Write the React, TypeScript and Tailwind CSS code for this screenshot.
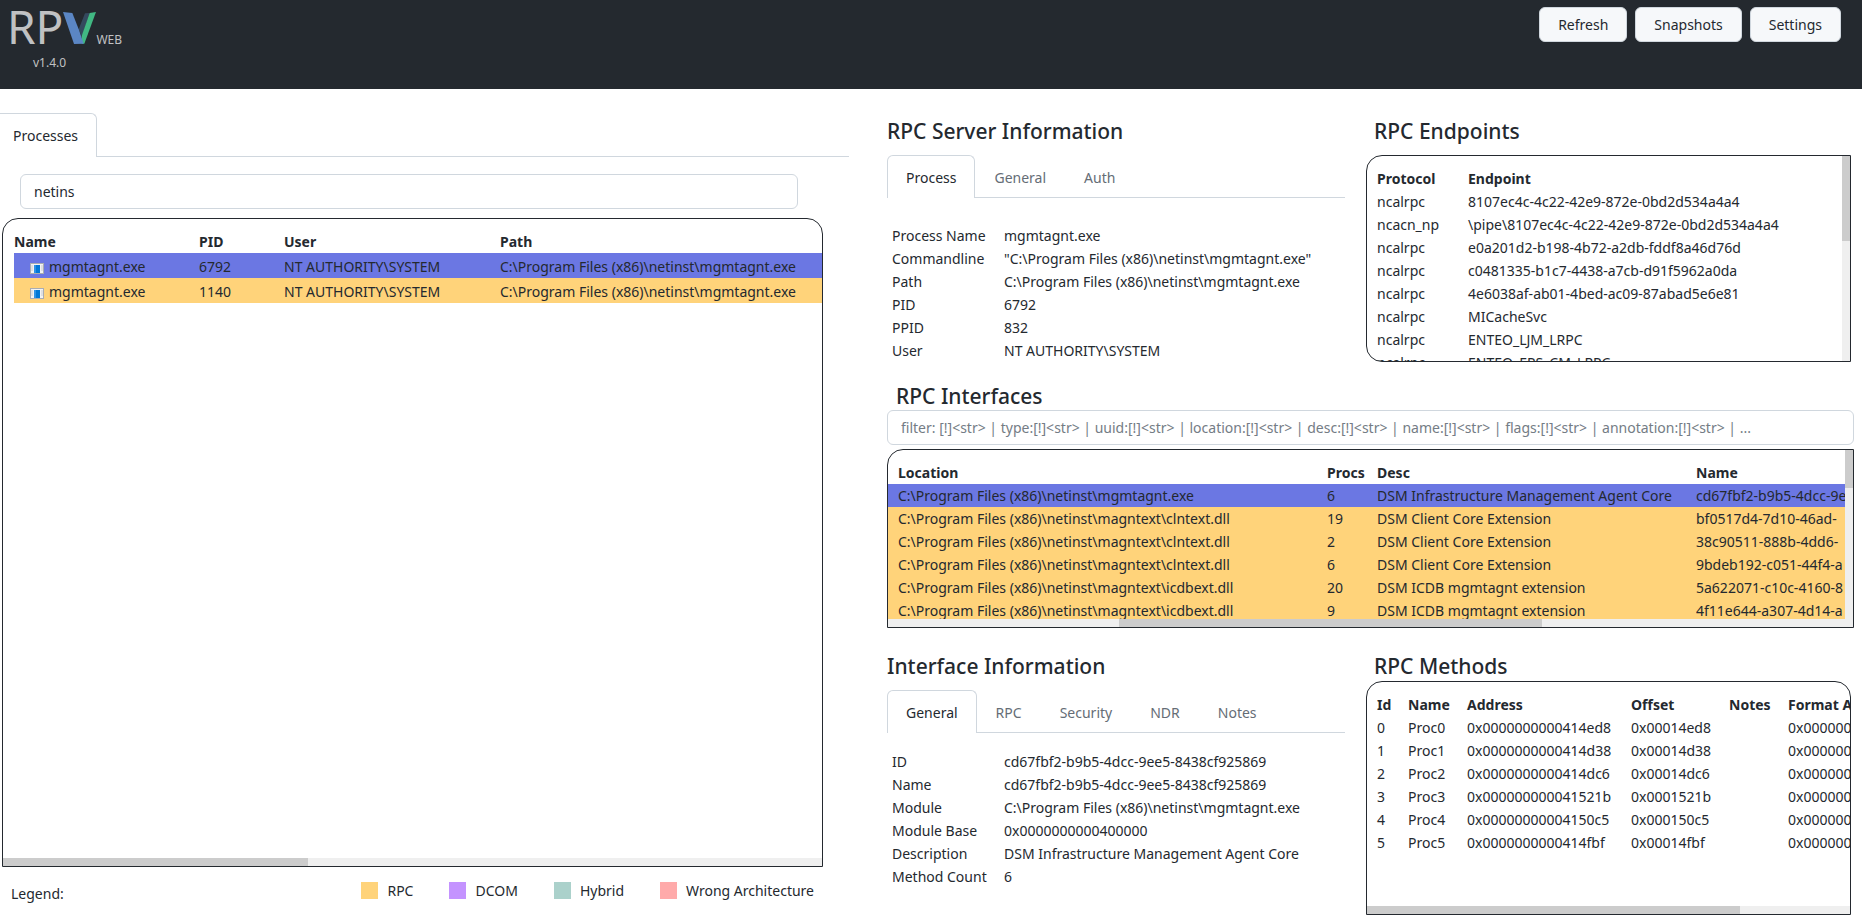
import React, { useState } from 'react';

const processes = [
  { name: 'mgmtagnt.exe', pid: 6792, user: 'NT AUTHORITY\\SYSTEM', path: 'C:\\Program Files (x86)\\netinst\\mgmtagnt.exe' },
  { name: 'mgmtagnt.exe', pid: 1140, user: 'NT AUTHORITY\\SYSTEM', path: 'C:\\Program Files (x86)\\netinst\\mgmtagnt.exe' },
];

const serverInfo = [
  ['Process Name', 'mgmtagnt.exe'],
  ['Commandline', '"C:\\Program Files (x86)\\netinst\\mgmtagnt.exe"'],
  ['Path', 'C:\\Program Files (x86)\\netinst\\mgmtagnt.exe'],
  ['PID', '6792'],
  ['PPID', '832'],
  ['User', 'NT AUTHORITY\\SYSTEM'],
];

const endpoints = [
  ['ncalrpc', '8107ec4c-4c22-42e9-872e-0bd2d534a4a4'],
  ['ncacn_np', '\\pipe\\8107ec4c-4c22-42e9-872e-0bd2d534a4a4'],
  ['ncalrpc', 'e0a201d2-b198-4b72-a2db-fddf8a46d76d'],
  ['ncalrpc', 'c0481335-b1c7-4438-a7cb-d91f5962a0da'],
  ['ncalrpc', '4e6038af-ab01-4bed-ac09-87abad5e6e81'],
  ['ncalrpc', 'MICacheSvc'],
  ['ncalrpc', 'ENTEO_LJM_LRPC'],
  ['ncalrpc', 'ENTEO_EPS_CM_LRPC'],
];

const interfaces = [
  ['C:\\Program Files (x86)\\netinst\\mgmtagnt.exe', '6', 'DSM Infrastructure Management Agent Core', 'cd67fbf2-b9b5-4dcc-9ee5-8438cf925869'],
  ['C:\\Program Files (x86)\\netinst\\magntext\\clntext.dll', '19', 'DSM Client Core Extension', 'bf0517d4-7d10-46ad-'],
  ['C:\\Program Files (x86)\\netinst\\magntext\\clntext.dll', '2', 'DSM Client Core Extension', '38c90511-888b-4dd6-'],
  ['C:\\Program Files (x86)\\netinst\\magntext\\clntext.dll', '6', 'DSM Client Core Extension', '9bdeb192-c051-44f4-a'],
  ['C:\\Program Files (x86)\\netinst\\magntext\\icdbext.dll', '20', 'DSM ICDB mgmtagnt extension', '5a622071-c10c-4160-8'],
  ['C:\\Program Files (x86)\\netinst\\magntext\\icdbext.dll', '9', 'DSM ICDB mgmtagnt extension', '4f11e644-a307-4d14-a'],
];

const interfaceInfo = [
  ['ID', 'cd67fbf2-b9b5-4dcc-9ee5-8438cf925869'],
  ['Name', 'cd67fbf2-b9b5-4dcc-9ee5-8438cf925869'],
  ['Module', 'C:\\Program Files (x86)\\netinst\\mgmtagnt.exe'],
  ['Module Base', '0x0000000000400000'],
  ['Description', 'DSM Infrastructure Management Agent Core'],
  ['Method Count', '6'],
];

const methods = [
  ['0', 'Proc0', '0x0000000000414ed8', '0x00014ed8'],
  ['1', 'Proc1', '0x0000000000414d38', '0x00014d38'],
  ['2', 'Proc2', '0x0000000000414dc6', '0x00014dc6'],
  ['3', 'Proc3', '0x000000000041521b', '0x0001521b'],
  ['4', 'Proc4', '0x00000000004150c5', '0x000150c5'],
  ['5', 'Proc5', '0x0000000000414fbf', '0x00014fbf'],
];

const legend = [
  { label: 'RPC', color: 'bg-[#ffd37a]' },
  { label: 'DCOM', color: 'bg-[#c493ff]' },
  { label: 'Hybrid', color: 'bg-[#abd1cb]' },
  { label: 'Wrong Architecture', color: 'bg-[#ffaaaa]' },
];

const inputClass =
  'h-[35px] px-[13px] border border-[#d0d7de] rounded-md bg-white placeholder:text-[#747c85] focus:outline-none';

const VueLogo = () => (
  <svg viewBox="0 0 99 96" className="w-[33px] h-8" aria-hidden="true">
    <polygon points="66,4 80,3 57,74 47,52" fill="#34495e" />
    <polygon points="80,3 99,0 64,95 56,95 56,72" fill="#41b883" />
    <polygon points="0,0 28,3 48,54 62,95 33,96" fill="#5b86c4" />
  </svg>
);

const ExeIcon = () => (
  <svg viewBox="0 0 14 11" className="w-3.5 h-[11px] mt-1" aria-hidden="true">
    <rect width="14" height="11" fill="#a9adb3" />
    <rect x="1" y="1" width="12" height="9" fill="#f3f3f3" />
    <rect x="4" y="2" width="6" height="8" fill="#0078d7" />
    <path d="M4 2h2v8h-2z" fill="#2f93e6" />
    <path d="M1 3h2M1 5h2M1 7h2M11 3h2M11 5h2M11 7h2" stroke="#c9ccd0" />
  </svg>
);

const Tabs = ({ items, flush }: { items: string[]; flush?: boolean }) => {
  const [active, setActive] = useState(items[0]);

  return (
    <div role="tablist" className="flex border-b border-[#d0d7de]">
      {items.map((item) => (
        <button
          key={item}
          role="tab"
          aria-selected={item === active}
          onClick={() => setActive(item)}
          className={`-mb-px pr-[18px] border border-b-0 rounded-t-md ${
            flush ? 'h-11 pl-[13px] border-l-0 rounded-tl-none' : 'h-[43px] pl-[18px]'
          } ${item === active ? 'bg-white border-[#d0d7de]' : 'border-transparent text-[#656d76]'}`}
        >
          {item}
        </button>
      ))}
    </div>
  );
};

const InfoTable = ({ rows }: { rows: string[][] }) => (
  <table className="w-full text-left table-fixed">
    <colgroup>
      <col className="w-[117px]" />
      <col />
    </colgroup>
    <tbody>
      {rows.map(([label, value]) => (
        <tr key={label} className="h-[23px]">
          <th scope="row" className="pl-[5px] font-normal">{label}</th>
          <td>{value}</td>
        </tr>
      ))}
    </tbody>
  </table>
);

// start and size are percentages of the track
const ScrollBar = ({ vertical, start = 0, size }: { vertical?: boolean; start?: number; size: number }) => (
  <div className={`flex shrink-0 bg-[#efefef] ${vertical ? 'flex-col w-2' : 'h-2'}`}>
    <div style={vertical ? { height: `${start}%` } : { width: `${start}%` }} />
    <div className="bg-[#cccccc]" style={vertical ? { height: `${size}%` } : { width: `${size}%` }} />
  </div>
);

const App = () => {
  const [processFilter, setProcessFilter] = useState('netins');
  const [interfaceFilter, setInterfaceFilter] = useState('');
  const [selectedPid, setSelectedPid] = useState(6792);
  const [selectedInterface, setSelectedInterface] = useState(0);

  return (
    <div className="flex flex-col min-h-screen bg-white text-[#24292f] text-sm leading-[23px] whitespace-nowrap font-['Noto_Sans',sans-serif]">
      <header className="flex items-start justify-between h-[89px] bg-[#24292f] pl-[7px] pr-[21px]">
        <div className="pt-[3px] text-[#c0c1c3]">
          <div className="flex items-baseline">
            <span className="text-[46px] leading-none">RP</span>
            <VueLogo />
            <span className="text-xs leading-none">WEB</span>
          </div>
          <div className="pl-[26px] pt-[5px] text-xs leading-[18px]">v1.4.0</div>
        </div>
        <div className="flex gap-2 pt-[7px]">
          {['Refresh', 'Snapshots', 'Settings'].map((label) => (
            <button key={label} className="h-[35px] px-[18px] rounded-md border border-[#d0d7de] bg-[#f6f8fa]">
              {label}
            </button>
          ))}
        </div>
      </header>

      <main className="grid flex-1 grid-cols-[849fr_1013fr] pt-6">
        {/* Process list */}
        <section className="flex flex-col min-w-0">
          <Tabs items={['Processes']} flush />
          <input
            type="text"
            aria-label="Filter processes"
            value={processFilter}
            onChange={(e) => setProcessFilter(e.target.value)}
            className={`${inputClass} mt-[17px] ml-5 mr-[51px]`}
          />
          <div className="flex flex-col flex-1 mt-[9px] ml-0.5 mr-[26px] border border-[#24292f] rounded-t-2xl overflow-hidden">
            <div className="flex-1 pt-[11px] pl-[11px] overflow-hidden">
              <table className="w-full text-left table-fixed">
                <colgroup>
                  <col className="w-[185px]" />
                  <col className="w-[85px]" />
                  <col className="w-[216px]" />
                  <col />
                </colgroup>
                <thead>
                  <tr className="h-[23px]">
                    <th>Name</th>
                    <th>PID</th>
                    <th>User</th>
                    <th>Path</th>
                  </tr>
                </thead>
                <tbody>
                  {processes.map((p) => (
                    <tr
                      key={p.pid}
                      onClick={() => setSelectedPid(p.pid)}
                      className={`h-[25px] ${p.pid === selectedPid ? 'bg-[#6b77e3]' : 'bg-[#ffd37a]'}`}
                    >
                      <td className="pt-0.5 pl-4">
                        <span className="flex items-center gap-[5px]">
                          <ExeIcon />
                          {p.name}
                        </span>
                      </td>
                      <td className="pt-0.5">{p.pid}</td>
                      <td className="pt-0.5">{p.user}</td>
                      <td className="pt-0.5">{p.path}</td>
                    </tr>
                  ))}
                </tbody>
              </table>
            </div>
            <ScrollBar size={37.3} />
          </div>
          <div className="flex items-center justify-between h-[52px] pl-[11px] pr-[35px]">
            <span>Legend:</span>
            <ul className="flex pb-1.5 gap-9">
              {legend.map((item) => (
                <li key={item.label} className="flex items-center gap-[9px]">
                  <span className={`w-[17px] h-[17px] ${item.color}`} />
                  {item.label}
                </li>
              ))}
            </ul>
          </div>
        </section>

        <section className="flex flex-col min-w-0 pl-[38px] pr-2 pb-1">
          <div className="grid grid-cols-[17fr_18fr] gap-[21px] pr-[3px]">
            {/* Server */}
            <div className="min-w-0">
              <h2 className="mt-1 mb-[10px] text-[21px] leading-7 font-medium">RPC Server Information</h2>
              <Tabs items={['Process', 'General', 'Auth']} />
              <div className="mt-[26px]">
                <InfoTable rows={serverInfo} />
              </div>
            </div>

            {/* Endpoints */}
            <div className="min-w-0">
              <h2 className="mt-1 mb-[10px] pl-2 text-[21px] leading-7 font-medium">RPC Endpoints</h2>
              <div className="flex h-[207px] border border-[#24292f] rounded-l-2xl overflow-hidden">
                <div className="flex-1 min-w-0 pt-[11px] pl-[10px] overflow-hidden">
                  <table className="w-full text-left table-fixed">
                    <colgroup>
                      <col className="w-[91px]" />
                      <col />
                    </colgroup>
                    <thead>
                      <tr className="h-[23px]">
                        <th>Protocol</th>
                        <th>Endpoint</th>
                      </tr>
                    </thead>
                    <tbody>
                      {endpoints.map(([protocol, endpoint]) => (
                        <tr key={endpoint} className="h-[23px]">
                          <td>{protocol}</td>
                          <td>{endpoint}</td>
                        </tr>
                      ))}
                    </tbody>
                  </table>
                </div>
                <ScrollBar vertical size={41.5} />
              </div>
            </div>
          </div>

          {/* Interfaces */}
          <h2 className="mt-5 pl-[9px] text-[21px] leading-7 font-medium">RPC Interfaces</h2>
          <input
            type="text"
            aria-label="Filter interfaces"
            value={interfaceFilter}
            onChange={(e) => setInterfaceFilter(e.target.value)}
            placeholder="filter: [!]<str> | type:[!]<str> | uuid:[!]<str> | location:[!]<str> | desc:[!]<str> | name:[!]<str> | flags:[!]<str> | annotation:[!]<str> | ..."
            className={inputClass}
          />
          <div className="flex h-[179px] mt-1 border border-[#24292f] rounded-tl-2xl overflow-hidden">
            <div className="flex flex-col flex-1 min-w-0">
              <div className="flex-1 pt-[11px] overflow-hidden">
                <table className="w-full text-left table-fixed">
                  <colgroup>
                    <col className="w-[439px]" />
                    <col className="w-[50px]" />
                    <col className="w-[319px]" />
                    <col />
                  </colgroup>
                  <thead>
                    <tr className="h-[23px]">
                      <th className="pl-[10px]">Location</th>
                      <th>Procs</th>
                      <th>Desc</th>
                      <th>Name</th>
                    </tr>
                  </thead>
                  <tbody>
                    {interfaces.map(([location, procs, desc, name], i) => (
                      <tr
                        key={name}
                        onClick={() => setSelectedInterface(i)}
                        className={`h-[23px] ${i === selectedInterface ? 'bg-[#6b77e3]' : 'bg-[#ffd37a]'}`}
                      >
                        <td className="pl-[10px]">{location}</td>
                        <td>{procs}</td>
                        <td>{desc}</td>
                        <td className="overflow-hidden">{name}</td>
                      </tr>
                    ))}
                  </tbody>
                </table>
              </div>
              <ScrollBar start={24.1} size={44.2} />
            </div>
            <ScrollBar vertical size={21.5} />
          </div>

          <div className="grid flex-1 grid-cols-[17fr_18fr] gap-[21px] mt-6 pr-[3px]">
            <div className="min-w-0">
              <h2 className="mb-[10px] text-[21px] leading-7 font-medium">Interface Information</h2>
              <Tabs items={['General', 'RPC', 'Security', 'NDR', 'Notes']} />
              <div className="mt-[17px]">
                <InfoTable rows={interfaceInfo} />
              </div>
            </div>

            {/* Methods */}
            <div className="flex flex-col min-w-0">
              <h2 className="mb-px pl-2 text-[21px] leading-7 font-medium">RPC Methods</h2>
              <div className="flex flex-col flex-1 border border-[#24292f] rounded-t-2xl overflow-hidden">
                <div className="flex-1 pt-[11px] pl-[10px] overflow-hidden">
                  <table className="w-full text-left table-fixed">
                    <colgroup>
                      <col className="w-[31px]" />
                      <col className="w-[59px]" />
                      <col className="w-[164px]" />
                      <col className="w-[98px]" />
                      <col className="w-[59px]" />
                      <col />
                    </colgroup>
                    <thead>
                      <tr className="h-[23px]">
                        <th>Id</th>
                        <th>Name</th>
                        <th>Address</th>
                        <th>Offset</th>
                        <th>Notes</th>
                        <th>Format A</th>
                      </tr>
                    </thead>
                    <tbody>
                      {methods.map(([id, name, address, offset]) => (
                        <tr key={id} className="h-[23px]">
                          <td>{id}</td>
                          <td>{name}</td>
                          <td>{address}</td>
                          <td>{offset}</td>
                          <td></td>
                          <td>0x0000000</td>
                        </tr>
                      ))}
                    </tbody>
                  </table>
                </div>
                <ScrollBar size={77.3} />
              </div>
            </div>
          </div>
        </section>
      </main>
    </div>
  );
};

export default App;
